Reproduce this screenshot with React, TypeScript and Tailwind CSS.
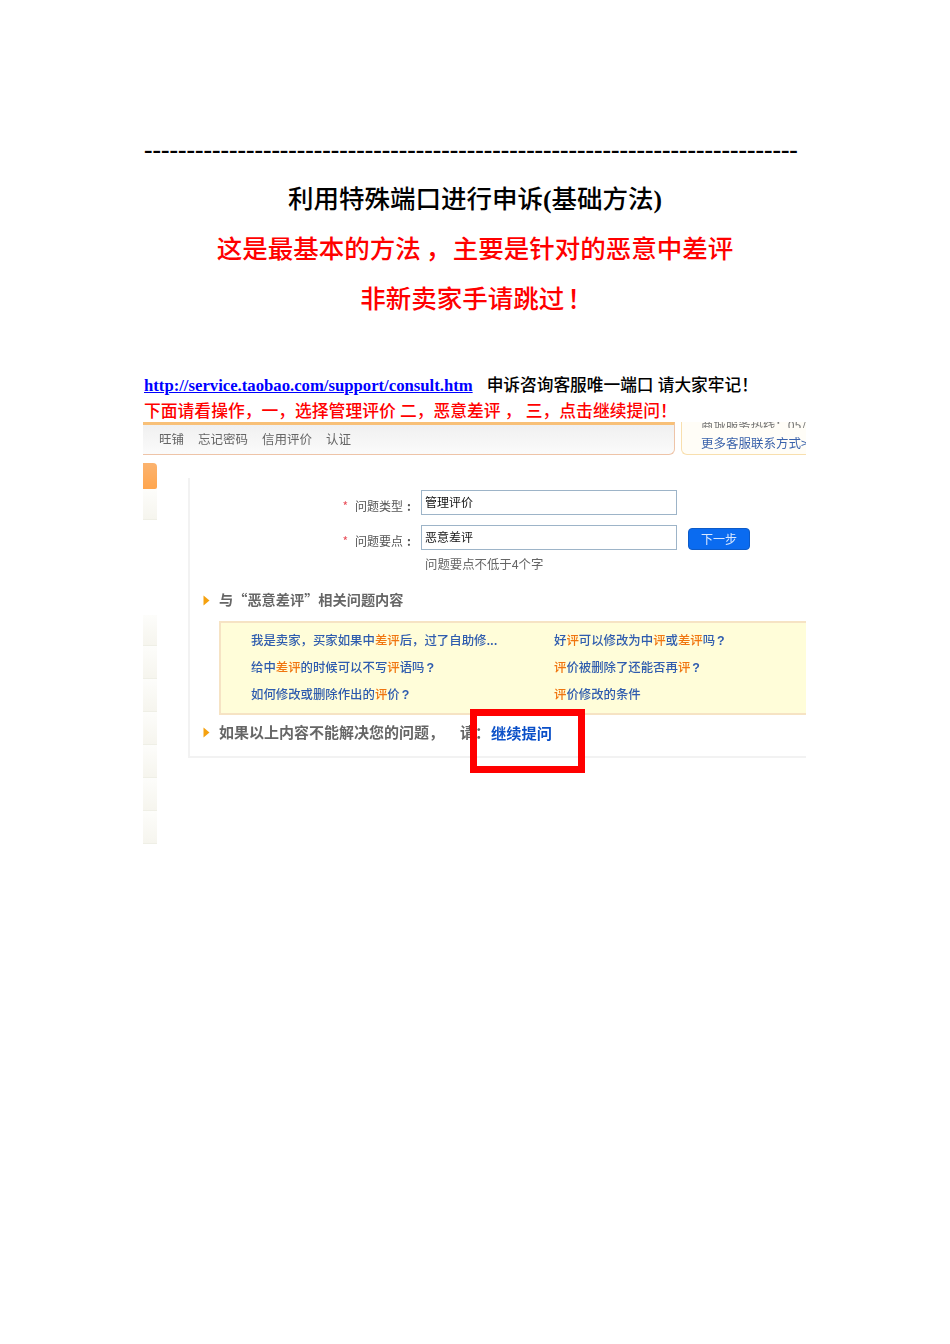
const Hl = ({ children }: { children: React.ReactNode }) => (
  <span className="text-[#f0750f]">{children}</span>
);

const Q = () => <span className="ml-[2px] font-bold font-['Liberation_Sans',sans-serif]">?</span>;

const Arrow = ({ className = "" }: { className?: string }) => (
  <svg width="7" height="11" viewBox="0 0 7 11" className={`shrink-0 ${className}`}>
    <polygon points="0.5,0.5 6.5,5.5 0.5,10.5" fill="#f5a10f" />
  </svg>
);

const SideTab = () => (
  <div className="h-[33px] border-b border-[#efefe6] bg-gradient-to-b from-[#fdfdfb] to-[#f6f5ee]" />
);

const Field = ({ label, value, children }: { label: string; value: string; children?: React.ReactNode }) => (
  <div className="flex items-center h-[25px]">
    <div className="w-[231px] flex justify-end pr-[10px] pt-[6px] text-[12px] text-[#555]">
      <span className="text-[#e8505b] mr-[7px]">*</span>
      {label}
      <span className="ml-[4px] font-bold">:</span>
    </div>
    <div className="w-[256px] h-[25px] border border-[#9db4c8] pl-[3px] text-[12px] leading-[22px] text-[#111]">{value}</div>
    {children}
  </div>
);

export default function App() {
  const serif = "font-['Liberation_Serif','Noto_Sans_CJK_SC',serif]";
  return (
    <div className={`min-h-[1344px] w-[950px] bg-white pt-[137px] pl-[143px] ${serif}`}>
      <div className="w-[664px]">
        <div className="h-[26px] pl-px text-[25.5px] leading-[26px] font-bold text-black whitespace-nowrap">
          {"-".repeat(77)}
        </div>
        <div className="mt-[12px] text-center text-[25.5px] leading-[50px] font-medium">
          <div className="text-black">
            利用特殊端口进行申诉<span className="font-bold">(</span>基础方法<span className="font-bold">)</span>
          </div>
          <div className="text-[#ff0000]">
            这是最基本的方法<span className="pl-[5px] -mr-[5px]">，</span> 主要是针对的恶意中差评
          </div>
          <div className="text-[#ff0000]">非新卖家手请跳过<span className="pl-[3px] -mr-[3px]">！</span></div>
        </div>
        <div className="mt-[48px] h-[25px] pl-px text-[16.7px] leading-[25px] font-medium whitespace-nowrap text-black">
          <a className="text-[#0000ff] underline font-bold">http://service.taobao.com/support/consult.htm</a>
          <span className="ml-[14px]">申诉咨询客服唯一端口 请大家牢记！</span>
        </div>
        <div className="h-[24px] pl-px text-[16.8px] leading-[27px] font-medium whitespace-nowrap text-[#ff0000]">
          下面请看操作，一，选择管理评价 二，恶意差评 ， 三，点击继续提问！
        </div>

        {/* pasted screenshot */}
        <div className="w-[663px] h-[424px] overflow-hidden flex flex-col font-['Noto_Sans_CJK_SC',sans-serif] blur-[0.35px]">
          <div className="flex h-[33px] shrink-0">
            <div className="w-[532px] pb-[1px] border-t-[3px] border-t-[#f8c078] border-b border-r border-b-[#eec4a8] border-r-[#eec4a8] rounded-br-[6px] bg-gradient-to-b from-[#f0f0f0] to-[#fbfbfb] flex items-center gap-[14px] pl-[16px] text-[12.5px] text-[#666]">
              <span>旺铺</span>
              <span>忘记密码</span>
              <span>信用评价</span>
              <span>认证</span>
            </div>
            <div className="ml-[6px] flex-1 border border-t-0 border-r-0 border-[#f8dfae] rounded-bl-[6px] bg-[#fffdf7] pl-[19px] overflow-hidden">
              <div className="h-[6px] overflow-hidden whitespace-nowrap">
                <div className="-mt-[4px] text-[12.4px] leading-[14px] text-[#777]">商城服务热线：05/</div>
              </div>
              <div className="mt-[7px] text-[12.5px] leading-[16px] text-[#3a62ab] whitespace-nowrap">更多客服联系方式&gt;</div>
            </div>
          </div>

          <div className="flex flex-1 mt-[8px]">
            <div className="w-[14px] shrink-0 flex flex-col">
              <div className="h-[26px] rounded-tr-[4px] rounded-br-[2px] bg-gradient-to-b from-[#fbb36f] to-[#ffa64d]" />
              <div className="h-[31px] border-b border-[#efefe6] bg-gradient-to-b from-[#fdfdfb] to-[#f6f5ee]" />
              <div className="h-[95px]" />
              <div className="h-[31px] border-b border-[#efefe6] bg-gradient-to-b from-[#fdfdfb] to-[#f6f5ee]" />
              <SideTab />
              <SideTab />
              <SideTab />
              <SideTab />
              <SideTab />
              <SideTab />
            </div>

            <div className="ml-[31px] mt-[15px] flex-1 h-[280px] border-l-2 border-b-2 border-[#f2f2f2] pt-[12px]">
              <Field label="问题类型" value="管理评价" />
              <div className="mt-[10px]">
                <Field label="问题要点" value="恶意差评">
                  <div className="ml-[11px] mt-[3px] w-[62px] h-[22px] rounded-[4px] bg-[#0a6bf0] border border-[#0d5bc8] text-center text-[12px] leading-[20px] text-[#dbe9ff]">
                    下一步
                  </div>
                </Field>
              </div>
              <div className="mt-[5px] ml-[235px] text-[12.4px] leading-[18px] text-[#666]">问题要点不低于4个字</div>
              <div className="mt-[16px] ml-[13px] flex items-center gap-[9px] text-[14.2px] leading-[20px] font-bold text-[#666]">
                <Arrow className="mt-[2px]" />
                <span>与“恶意差评”相关问题内容</span>
              </div>
              <div className="mt-[12px] ml-[29px] h-[94px] border-2 border-r-0 border-[#f6e3c4] bg-[#fffdd9] pl-[30px] pt-[7px] grid grid-cols-[303px_1fr] auto-rows-[27px] text-[12.4px] leading-[20px] font-medium text-[#2f5cae] whitespace-nowrap">
                <div>我是卖家，买家如果中<Hl>差评</Hl>后，过了自助修...</div>
                <div>好<Hl>评</Hl>可以修改为中<Hl>评</Hl>或<Hl>差评</Hl>吗<Q /></div>
                <div>给中<Hl>差评</Hl>的时候可以不写<Hl>评</Hl>语吗<Q /></div>
                <div><Hl>评</Hl>价被删除了还能否再<Hl>评</Hl><Q /></div>
                <div>如何修改或删除作出的<Hl>评</Hl>价<Q /></div>
                <div><Hl>评</Hl>价修改的条件</div>
              </div>
              <div className="relative mt-[6px] ml-[13px] flex items-center gap-[9px] text-[15px] leading-[22px] font-bold text-[#666] whitespace-nowrap">
                <Arrow />
                <span>如果以上内容不能解决您的问题，</span>
                <span className="ml-[7px]">请：</span>
                <span className="-ml-[8px] text-[15.25px] text-[#0b50c8]">继续提问</span>
                <div className="absolute left-[267px] top-[-12px] w-[115px] h-[64px] border-[7px] border-[#ff0000]" />
              </div>
            </div>
          </div>
        </div>
      </div>
    </div>
  );
}
